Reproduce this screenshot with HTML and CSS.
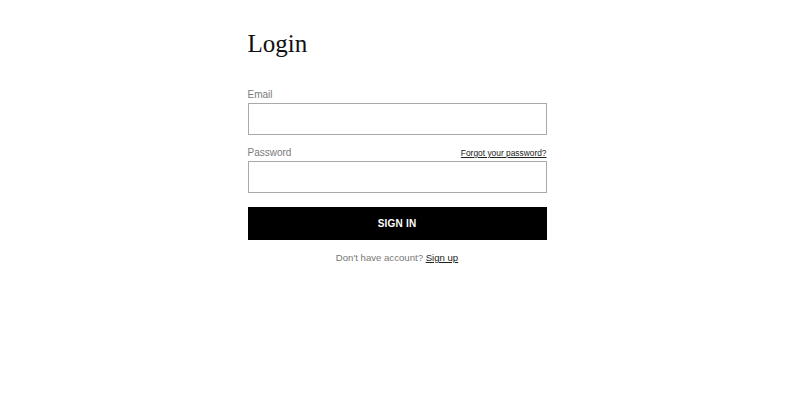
FILE: index.html
```html
<!DOCTYPE html>
<html lang="en">
<head>
<meta charset="UTF-8" />
<meta name="viewport" content="width=device-width, initial-scale=1" />
<title>Login</title>
<link rel="stylesheet" href="styles.css">
</head>
<body>
<main class="page">
  <div class="login">
    <h1>Login</h1>
    <form class="login-form" novalidate>
      <div class="field">
        <div class="field-head">
          <label for="email">Email</label>
        </div>
        <input type="email" id="email" name="email" />
      </div>
      <div class="field">
        <div class="field-head">
          <label for="password">Password</label>
          <a href="#" class="forgot">Forgot your password?</a>
        </div>
        <input type="password" id="password" name="password" />
      </div>
      <button type="submit" class="submit-btn">SIGN IN</button>
    </form>
    <p class="signup">Don't have account? <a href="#">Sign up</a></p>
  </div>
</main>
</body>
</html>
```

FILE: styles.css
```css
body {
  margin: 0;
  background: #fff;
  color: #111;
  font-family: "Liberation Sans", Arial, sans-serif;
}
.page {
  display: flex;
  justify-content: center;
  padding-top: 30px;
}
.login {
  width: 299px;
  margin-right: 7px;
}
h1 {
  font-family: "Liberation Serif", "Times New Roman", serif;
  font-weight: normal;
  font-size: 25px;
  line-height: 28px;
  margin: 0 0 31px;
  color: #111;
}
.field {
  margin-bottom: 12px;
}
.field-head {
  display: flex;
  justify-content: space-between;
  align-items: flex-end;
  margin-bottom: 2px;
}
label {
  font-size: 10px;
  color: #7a7a7a;
  line-height: 12px;
}
.forgot {
  font-size: 8.4px;
  color: #222;
  text-decoration: underline;
  line-height: 11px;
}
input {
  display: block;
  width: 100%;
  height: 32px;
  box-sizing: border-box;
  border: 1px solid #a9a9a9;
  border-radius: 0;
  padding: 0 8px;
  outline: none;
}
.submit-btn {
  display: block;
  width: 100%;
  height: 33px;
  margin-top: 14px;
  border: none;
  background: #000;
  color: #fff;
  font-family: "Liberation Sans", Arial, sans-serif;
  font-size: 10px;
  font-weight: bold;
  letter-spacing: 0.2px;
  cursor: pointer;
}
.signup {
  text-align: center;
  font-size: 9.6px;
  color: #777;
  margin: 12px 0 0;
}
.signup a {
  color: #222;
  text-decoration: underline;
}
```
